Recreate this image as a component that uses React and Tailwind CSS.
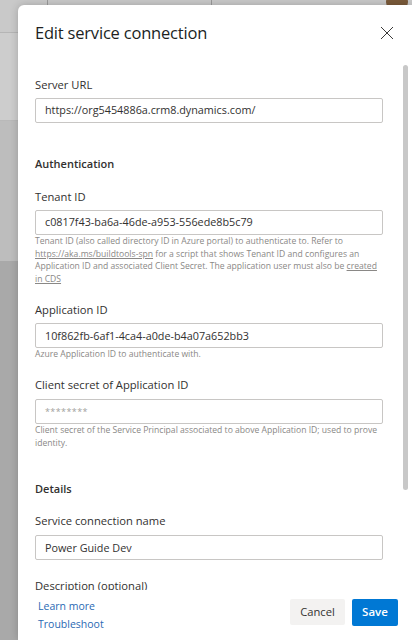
import React from 'react';

const Field = ({ label, value, muted, help, labelGap = 'mt-[4px]' }) => (
  <div>
    <div className="text-[11.2px] leading-[18px] text-[#323130]">{label}</div>
    <div className={`${labelGap} h-[25px] border border-[#c8c6c4] rounded-[2px] flex items-center px-[9px]`}>
      <span className={muted ? 'text-[9px] tracking-[0.4px] text-[#a19f9d]' : 'text-[10.8px] text-[#323130]'}>{value}</span>
    </div>
    {help && <div className="text-[8.6px] leading-[12.6px] text-[#8a8886]">{help}</div>}
  </div>
);

const App = () => {
  return (
    <div className="relative w-[412px] h-[640px] overflow-hidden bg-[#a9a9a9]" style={{ fontFamily: '"Open Sans", "Noto Sans", sans-serif' }}>
      {/* dimmed page behind the dialog */}
      <div className="h-[33px] bg-[#c9c9c9] border-b border-[#b5b5b5] flex">
        <div className="w-[48px] border-r border-[#9a9a9a]" />
        <div className="w-[164px] border-r border-[#9a9a9a]" />
      </div>
      <div className="h-[88px] bg-[#cdcdcd] border-b border-[#b9b9b9]" />
      <div className="h-[140px] bg-[#bdbdbd]" />

      <div className="absolute right-[4px] -top-[6px] w-[22px] h-[16px] rounded-full bg-[#7a5a3a]" />

      {/* dialog */}
      <div className="absolute left-[18px] top-[5px] right-0 bottom-0 bg-white rounded-tl-[6px] shadow-[0_0_8px_rgba(0,0,0,0.2)] flex flex-col">
        <div className="h-[55px] shrink-0 flex items-center justify-between pl-[17px] pr-[18px]">
          <h1 className="text-[16.5px] text-[#201f1e] tracking-[-0.2px] pt-[1px]">Edit service connection</h1>
          <svg width="14" height="14" viewBox="0 0 14 14" className="mt-[1px]">
            <path d="M1 1 L13 13 M13 1 L1 13" stroke="#3b3a39" strokeWidth="1" fill="none" />
          </svg>
        </div>

        <div className="relative flex-1 overflow-hidden">
          <div className="pl-[17px] pr-[29px] pt-[16px]">
            <Field label="Server URL" value="https://org5454886a.crm8.dynamics.com/" />

            <div className="mt-[32px] text-[11px] leading-[18px] font-semibold text-[#323130]">Authentication</div>

            <div className="mt-[15px]">
              <Field
                label="Tenant ID"
                value="c0817f43-ba6a-46de-a953-556ede8b5c79"
                help={
                  <>
                    Tenant ID (also called directory ID in Azure portal) to authenticate to. Refer to{' '}
                    <span className="underline">https://aka.ms/buildtools-spn</span> for a script that shows Tenant ID and configures an
                    Application ID and associated Client Secret. The application user must also be{' '}
                    <span className="underline">created in CDS</span>
                  </>
                }
              />
            </div>

            <div className="mt-[16px]">
              <Field label="Application ID" value="10f862fb-6af1-4ca4-a0de-b4a07a652bb3" help="Azure Application ID to authenticate with." />
            </div>

            <div className="mt-[15px]">
              <Field
                label="Client secret of Application ID"
                value="********"
                muted
                labelGap="mt-[5px]"
                help="Client secret of the Service Principal associated to above Application ID; used to prove identity."
              />
            </div>

            <div className="mt-[31px] text-[11px] leading-[18px] font-semibold text-[#323130]">Details</div>

            <div className="mt-[14px]">
              <Field label="Service connection name" value="Power Guide Dev" labelGap="mt-[5px]" />
            </div>

            <div className="mt-[17px] text-[11.2px] leading-[18px] text-[#323130]">Description (optional)</div>
          </div>

          <div className="absolute right-[4px] top-[5px] w-[5px] h-[425px] rounded-full bg-[#c8c8c8]" />
        </div>

        <div className="h-[50px] shrink-0 bg-white flex items-center justify-between pl-[20px] pr-[14px]">
          <div className="flex flex-col text-[10.5px] leading-[18px] text-[#2a69b3]">
            <span>Learn more</span>
            <span>Troubleshoot</span>
          </div>
          <div className="flex items-center gap-[7px] -mt-[6px]">
            <button className="h-[26px] w-[55px] rounded-[2px] bg-[#f3f2f1] text-[11.2px] text-[#323130]">Cancel</button>
            <button className="h-[27px] w-[46px] rounded-[2px] bg-[#0078d4] text-[11.5px] font-semibold text-white">Save</button>
          </div>
        </div>
      </div>
    </div>
  );
};

export default App;
